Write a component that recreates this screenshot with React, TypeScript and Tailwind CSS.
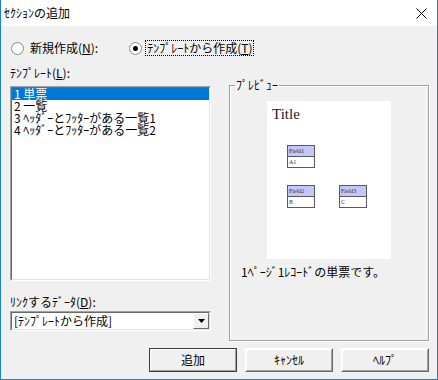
import React from 'react';

const jp = { fontFamily: '"Noto Sans CJK JP", "Noto Sans", sans-serif' };

function Radio({ checked }: { checked?: boolean }) {
  return (
    <span className="w-[13px] h-[13px] rounded-full border border-[#8a8a8a] bg-white flex items-center justify-center shrink-0">
      {checked && <span className="w-[5px] h-[5px] rounded-full bg-black" />}
    </span>
  );
}

function Btn({ children, primary }: { children: React.ReactNode; primary?: boolean }) {
  return (
    <div className={`w-[88px] h-[24px] border ${primary ? 'border-[#3c3c3c]' : 'border-t-white border-l-white border-r-[#696969] border-b-[#696969]'}`}>
      <div className="w-full h-full border border-t-white border-l-white border-r-[#a0a0a0] border-b-[#a0a0a0] bg-[#f0f0f0] flex items-center justify-center text-[12px] text-black">
        {children}
      </div>
    </div>
  );
}

function Field({ name, value }: { name: string; value: string }) {
  return (
    <div className="w-[28px] border border-[#5a5a5a] text-[6px] leading-[10px] text-[#333]" style={{ fontFamily: '"Liberation Serif", serif' }}>
      <div className="h-[11px] bg-[#c4c4ff] border-b border-[#5a5a5a] px-px">{name}</div>
      <div className="h-[10px] bg-white px-px">{value}</div>
    </div>
  );
}

export default function App() {
  const items = ['1 単票', '2 一覧', '3 ﾍｯﾀﾞｰとﾌｯﾀｰがある一覧1', '4 ﾍｯﾀﾞｰとﾌｯﾀｰがある一覧2'];
  return (
    <div className="w-[438px] h-[380px] bg-[#f0f0f0] border-l border-r border-b border-[#1883d7] flex flex-col text-black" style={jp}>
      {/* title bar */}
      <div className="h-[26px] bg-white flex items-center justify-between pl-[3px] pr-[10px] text-[12px]">
        <span>ｾｸｼｮﾝの追加</span>
        <svg width="11" height="11" viewBox="0 0 11 11">
          <path d="M0.5 0.5 L10.5 10.5 M10.5 0.5 L0.5 10.5" stroke="#000" strokeWidth="1" />
        </svg>
      </div>

      {/* radios */}
      <div className="h-[16px] mt-[14px] flex items-center pl-[10px] text-[12px]">
        <Radio />
        <span className="ml-[6px]">新規作成(<u>N</u>):</span>
        <span className="ml-[31px]"><Radio checked /></span>
        <span className="ml-[3px] px-px border border-dotted border-black leading-[14px]">ﾃﾝﾌﾟﾚｰﾄから作成(<u>T</u>)</span>
      </div>

      {/* main */}
      <div className="flex mt-[11px] pl-[9px] gap-[18px]">
        <div className="w-[201px] flex flex-col">
          <div className="h-[12px] leading-[12px] text-[12px]">ﾃﾝﾌﾟﾚｰﾄ(<u>L</u>):</div>
          <div className="mt-[7px] h-[195px] border border-t-[#a0a0a0] border-l-[#a0a0a0] border-r-white border-b-white">
            <div className="h-full border border-t-[#696969] border-l-[#696969] border-r-[#e3e3e3] border-b-[#e3e3e3] bg-white">
              {items.map((t, i) => (
                <div key={t} className={`h-[12px] leading-[12px] text-[12px] pl-[2px] ${i === 0 ? 'bg-[#0078d7] text-white' : ''}`}>
                  {t}
                </div>
              ))}
            </div>
          </div>
          <div className="mt-[15px] h-[12px] leading-[12px] text-[12px]">ﾘﾝｸするﾃﾞｰﾀ(<u>D</u>):</div>
          <div className="mt-[3px] h-[20px] border border-t-[#a0a0a0] border-l-[#a0a0a0] border-r-white border-b-white">
            <div className="h-full border border-t-[#696969] border-l-[#696969] border-r-[#e3e3e3] border-b-[#e3e3e3] bg-white flex items-center justify-between">
              <span className="text-[12px] leading-[12px] pl-[2px]">[ﾃﾝﾌﾟﾚｰﾄから作成]</span>
              <div className="w-[16px] h-[16px] border border-t-white border-l-white border-r-[#696969] border-b-[#696969] bg-[#f0f0f0] flex items-center justify-center">
                <svg width="7" height="4" viewBox="0 0 7 4">
                  <path d="M0 0 H7 L3.5 4 Z" fill="#000" />
                </svg>
              </div>
            </div>
          </div>
        </div>

        <fieldset className="mt-[12px] w-[200px] h-[262px] border border-[#a0a0a0] shadow-[inset_1px_1px_0_#fff,1px_1px_0_#fff]">
          <legend className="ml-[5px] px-[1px] text-[12px] leading-[12px]">ﾌﾟﾚﾋﾞｭｰ</legend>
          <div className="mt-[10px] mx-auto w-[124px] h-[158px] bg-white flex flex-col">
            <div className="pl-[5px] pt-[5px] text-[15px] leading-[16px] text-[#222]" style={{ fontFamily: '"Liberation Serif", serif' }}>
              Title
            </div>
            <div className="ml-[20px] mt-[23px]">
              <Field name="Field1" value="A1" />
            </div>
            <div className="ml-[20px] mt-[17px] flex gap-[24px]">
              <Field name="Field2" value="B" />
              <Field name="Field3" value="C" />
            </div>
          </div>
          <div className="mt-[7px] pl-[11px] text-[12px] leading-[12px]">1ﾍﾟｰｼﾞ1ﾚｺｰﾄﾞの単票です。</div>
        </fieldset>
      </div>

      {/* buttons */}
      <div className="mt-[7px] flex justify-end gap-[8px] pr-[8px]">
        <Btn primary>追加</Btn>
        <Btn>ｷｬﾝｾﾙ</Btn>
        <Btn>ﾍﾙﾌﾟ</Btn>
      </div>
    </div>
  );
}
